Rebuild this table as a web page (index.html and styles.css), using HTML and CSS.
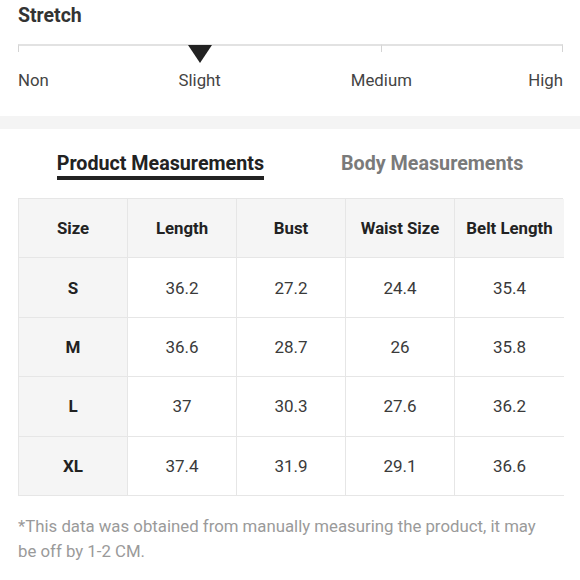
FILE: index.html
```html
<!DOCTYPE html>
<html>
<head>
<meta charset="utf-8">
<link rel="stylesheet" href="styles.css">
</head>
<body>
<section class="stretch">
  <h2 class="title">Stretch</h2>
  <div class="track">
    <div class="seg seg-1"></div>
    <div class="seg seg-2"></div>
    <div class="seg seg-3"></div>
  </div>
  <div class="labels">
    <span class="lbl lbl-start">Non</span>
    <span class="lbl lbl-mid">Slight</span>
    <span class="lbl lbl-mid">Medium</span>
    <span class="lbl lbl-end">High</span>
  </div>
</section>
<div class="band"></div>
<section class="measure">
  <div class="tabs">
    <div class="tab active">Product Measurements</div>
    <div class="tab">Body Measurements</div>
  </div>
  <div class="table">
    <div class="cell head key">Size</div>
    <div class="cell head">Length</div>
    <div class="cell head">Bust</div>
    <div class="cell head">Waist Size</div>
    <div class="cell head last">Belt Length</div>

    <div class="cell key">S</div>
    <div class="cell">36.2</div>
    <div class="cell">27.2</div>
    <div class="cell">24.4</div>
    <div class="cell last">35.4</div>

    <div class="cell key">M</div>
    <div class="cell">36.6</div>
    <div class="cell">28.7</div>
    <div class="cell">26</div>
    <div class="cell last">35.8</div>

    <div class="cell key">L</div>
    <div class="cell">37</div>
    <div class="cell">30.3</div>
    <div class="cell">27.6</div>
    <div class="cell last">36.2</div>

    <div class="cell key">XL</div>
    <div class="cell">37.4</div>
    <div class="cell">31.9</div>
    <div class="cell">29.1</div>
    <div class="cell last">36.6</div>
  </div>
  <p class="note">*This data was obtained from manually measuring the product, it may be off by 1-2 CM.</p>
</section>
</body>
</html>
```
FILE: styles.css
```css
* { box-sizing: border-box; }
html, body { margin: 0; padding: 0; background: #fff; }
body {
  font-family: Roboto, "Liberation Sans", Arial, sans-serif;
  color: #333;
  width: 580px;
}
.stretch {
  padding: 5px 17px 0 18px;
  height: 116px;
}
.title {
  margin: 0;
  font-size: 19.5px;
  line-height: 22px;
  font-weight: 700;
  color: #333;
}
.track {
  margin-top: 17px;
  display: grid;
  grid-template-columns: 1fr 1fr 1fr;
  height: 8px;
}
.seg {
  border-top: 2px solid #e2e2e2;
}
.seg-1 { border-left: 1px solid #d4d4d4; }
.seg-2 { position: relative; }
.seg-2::after {
  content: "";
  position: absolute;
  left: 0;
  top: -1px;
  transform: translateX(-50%);
  border-left: 12px solid transparent;
  border-right: 12px solid transparent;
  border-top: 18px solid #222;
}
.seg-3 {
  border-left: 1px solid #d4d4d4;
  border-right: 1px solid #d4d4d4;
}
.labels {
  display: flex;
  justify-content: space-between;
  margin-top: 17px;
  font-size: 16.8px;
  line-height: 22px;
  color: #444;
}
.lbl {
  width: 0;
  display: flex;
  white-space: nowrap;
}
.lbl-start { justify-content: flex-start; }
.lbl-mid { justify-content: center; }
.lbl-end { justify-content: flex-end; }
.band {
  height: 13px;
  background: #f4f4f4;
}
.measure {
  padding: 0 17px 0 18px;
}
.tabs {
  display: flex;
  justify-content: center;
  gap: 77px;
  padding-top: 23px;
  margin-left: -18px;
  margin-right: -17px;
}
.tab {
  font-size: 19.7px;
  font-weight: 700;
  line-height: 24px;
  color: #7a7a7a;
  padding-bottom: 0;
  border-bottom: 4px solid transparent;
}
.tab.active {
  color: #222;
  border-bottom-color: #222;
}
.table {
  margin-top: 18px;
  display: grid;
  grid-template-columns: repeat(5, 109px);
  grid-auto-rows: 59.4px;
  border-top: 1px solid #e6e6e6;
  border-left: 1px solid #e6e6e6;
}
.cell {
  display: flex;
  align-items: center;
  justify-content: center;
  font-size: 17px;
  color: #3a3a3a;
  border-right: 1px solid #e6e6e6;
  border-bottom: 1px solid #e6e6e6;
}
.cell.last { border-right: none; }
.cell.head {
  background: #f5f5f5;
  font-weight: 700;
  font-size: 16.8px;
  color: #222;
}
.cell.key {
  background: #f5f5f5;
  font-weight: 700;
  color: #222;
}
.note {
  margin: 18px 0 0 0;
  font-size: 16.8px;
  line-height: 25px;
  color: #9a9a9a;
  padding-right: 20px;
}
```
